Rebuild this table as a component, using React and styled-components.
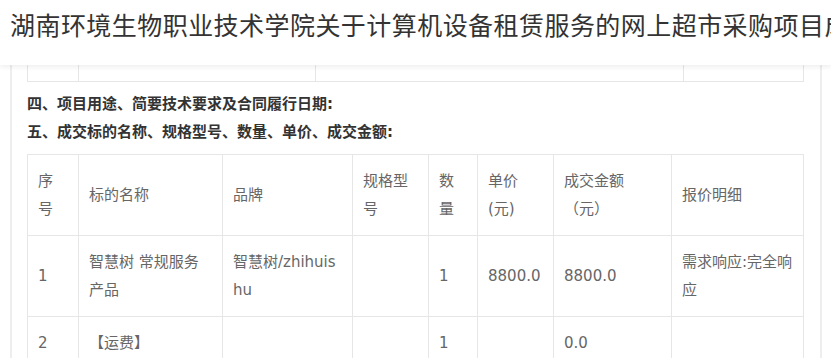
import React from 'react'
import styled, { createGlobalStyle } from 'styled-components'

const GlobalStyle = createGlobalStyle`
	body {
		margin: 0;
		background: #fff;
		font-family: "DejaVu Sans", "Noto Sans CJK SC", sans-serif;
		overflow: hidden;
	}
`

const Header = styled.header`
	position: relative;
	z-index: 2;
	height: 65px;
	box-sizing: border-box;
	padding: 7px 0 0 10px;
	background: #fff;
	box-shadow: 0 2px 5px rgba(0, 0, 0, 0.07);
	overflow: hidden;
`

const Title = styled.h1`
	margin: 0;
	font-family: "Noto Sans CJK SC", sans-serif;
	font-size: 25px;
	font-weight: 400;
	letter-spacing: 0.45px;
	line-height: 35px;
	color: #333;
	white-space: nowrap;
`

const Content = styled.main`
	margin: 0 9px 0 10px;
	padding: 0 17px 0 15px;
	border-left: 2px solid #eee;
	border-right: 2px solid #eee;
	min-height: 400px;
`

const Fragment = styled.table`
	width: 776px;
	border-collapse: collapse;
	table-layout: fixed;

	td {
		height: 16px;
		padding: 0;
		border: 1px solid #e6e6e6;
		border-top: none;
	}
`

const Headings = styled.div`
	padding: 8px 0;
`

const Heading = styled.p`
	margin: 0;
	font-size: 15px;
	font-weight: 700;
	line-height: 28px;
	color: #333;
`

const Table = styled.table`
	width: 776px;
	border-collapse: collapse;
	table-layout: fixed;
`

const Cell = styled.td`
	padding: 12px ${p => (p.$wide ? 5 : 11)}px 12px 10px;
	border: 1px solid #e6e6e6;
	font-size: 15px;
	line-height: 28px;
	color: #666;
	vertical-align: middle;
	word-break: break-all;
`

const widths = [51, 144, 130, 76, 49, 76, 118, 132]

const head = ['序号', '标的名称', '品牌', '规格型号', '数量', '单价(元)', '成交金额（元）', '报价明细']
const rows = [
	['1', '智慧树 常规服务产品', '智慧树/zhihuishu', '', '1', '8800.0', '8800.0', '需求响应:完全响应'],
	['2', '【运费】', '', '', '1', '', '0.0', ''],
]

function Cols() {
	return (
		<colgroup>
			{widths.map((w, i) => <col key={i} style={{ width: w }} />)}
		</colgroup>
	)
}

export default function App() {
	return (
		<>
			<GlobalStyle />
			<Header>
				<Title>湖南环境生物职业技术学院关于计算机设备租赁服务的网上超市采购项目成交公告</Title>
			</Header>
			<Content>
				<Fragment>
					<colgroup>
						<col style={{ width: 51 }} />
						<col style={{ width: 237 }} />
						<col style={{ width: 368 }} />
						<col style={{ width: 120 }} />
					</colgroup>
					<tbody>
						<tr><td /><td /><td /><td /></tr>
					</tbody>
				</Fragment>
				<Headings>
					<Heading>四、项目用途、简要技术要求及合同履行日期:</Heading>
					<Heading>五、成交标的名称、规格型号、数量、单价、成交金额:</Heading>
				</Headings>
				<Table>
					<Cols />
					<tbody>
						<tr>
							{head.map((h, i) => <Cell key={i} $wide={i === 7}>{h}</Cell>)}
						</tr>
						{rows.map(row => (
							<tr key={row[0]}>
								{row.map((c, i) => <Cell key={i} $wide={i === 7}>{c}</Cell>)}
							</tr>
						))}
					</tbody>
				</Table>
			</Content>
		</>
	)
}
